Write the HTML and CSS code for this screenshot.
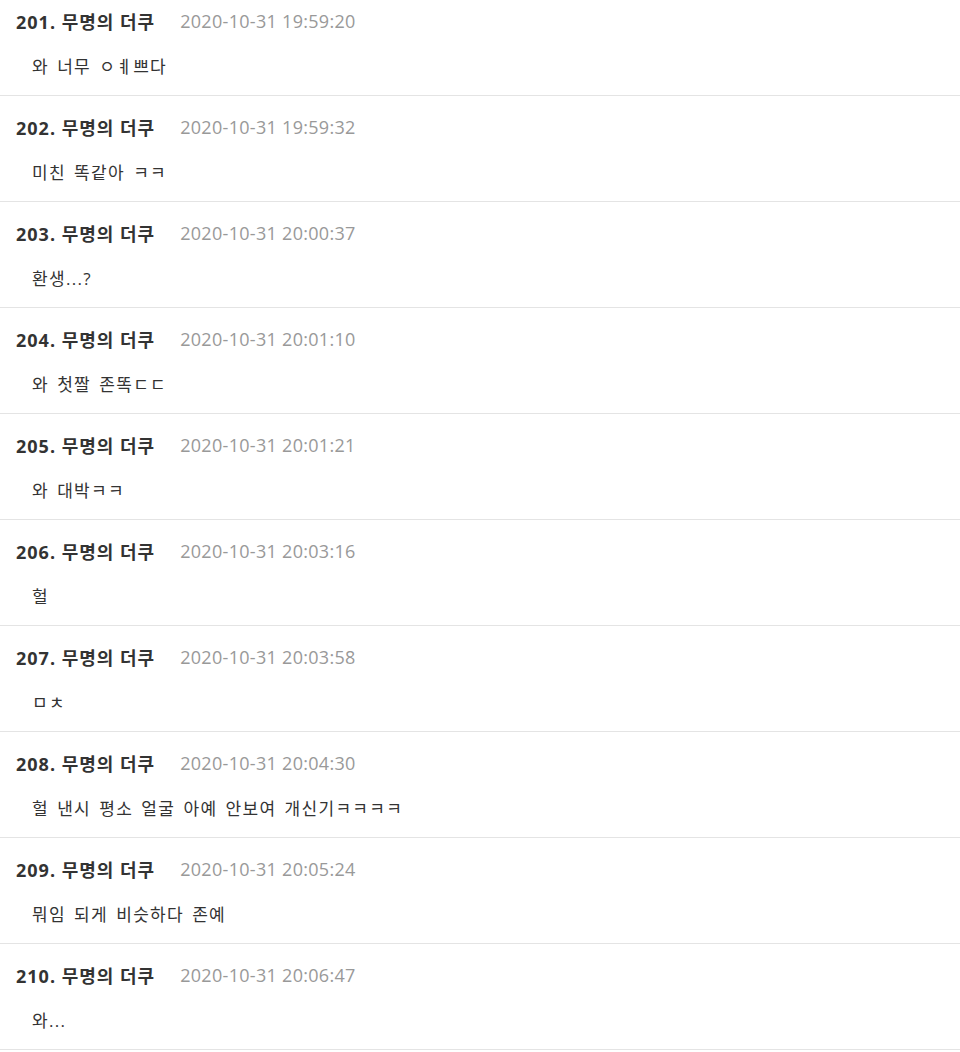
FILE: index.html
```html
<!DOCTYPE html>
<html lang="ko">
<head>
<meta charset="utf-8">
<link rel="stylesheet" href="styles.css">
</head>
<body>
<ul class="comments">
  <li class="comment"><div class="head"><span class="name">201. 무명의 더쿠</span><span class="date">2020-10-31 19:59:20</span></div><div class="text">와 너무 ㅇㅖ쁘다</div></li>
  <li class="comment"><div class="head"><span class="name">202. 무명의 더쿠</span><span class="date">2020-10-31 19:59:32</span></div><div class="text">미친 똑같아 ㅋㅋ</div></li>
  <li class="comment"><div class="head"><span class="name">203. 무명의 더쿠</span><span class="date">2020-10-31 20:00:37</span></div><div class="text">환생...?</div></li>
  <li class="comment"><div class="head"><span class="name">204. 무명의 더쿠</span><span class="date">2020-10-31 20:01:10</span></div><div class="text">와 첫짤 존똑ㄷㄷ</div></li>
  <li class="comment"><div class="head"><span class="name">205. 무명의 더쿠</span><span class="date">2020-10-31 20:01:21</span></div><div class="text">와 대박ㅋㅋ</div></li>
  <li class="comment"><div class="head"><span class="name">206. 무명의 더쿠</span><span class="date">2020-10-31 20:03:16</span></div><div class="text">헐</div></li>
  <li class="comment"><div class="head"><span class="name">207. 무명의 더쿠</span><span class="date">2020-10-31 20:03:58</span></div><div class="text">ㅁㅊ</div></li>
  <li class="comment"><div class="head"><span class="name">208. 무명의 더쿠</span><span class="date">2020-10-31 20:04:30</span></div><div class="text">헐 낸시 평소 얼굴 아예 안보여 개신기ㅋㅋㅋㅋ</div></li>
  <li class="comment"><div class="head"><span class="name">209. 무명의 더쿠</span><span class="date">2020-10-31 20:05:24</span></div><div class="text">뭐임 되게 비슷하다 존예</div></li>
  <li class="comment"><div class="head"><span class="name">210. 무명의 더쿠</span><span class="date">2020-10-31 20:06:47</span></div><div class="text">와...</div></li>
</ul>
</body>
</html>
```

FILE: styles.css
```css
html, body {
  margin: 0;
  padding: 0;
  background: #fff;
}
body {
  font-family: "Open Sans", "Noto Sans CJK KR", sans-serif;
  color: #333;
  overflow: hidden;
}
.comments {
  list-style: none;
  margin: -10px 0 0 0;
  padding: 0;
}
.comment {
  padding: 15px 16px 12px 16px;
  border-bottom: 1px solid #e4e4e4;
}
.head {
  display: flex;
  align-items: center;
  gap: 25px;
  height: 32px;
}
.name {
  font-size: 18px;
  font-weight: 700;
  letter-spacing: 1px;
  color: #333;
}
.date {
  font-size: 18px;
  letter-spacing: 0.3px;
  color: #999;
}
.text {
  margin-top: 14px;
  height: 32px;
  line-height: 32px;
  padding-left: 16px;
  font-size: 17px;
  letter-spacing: 1.3px;
  word-spacing: 2.5px;
  color: #333;
}
```
